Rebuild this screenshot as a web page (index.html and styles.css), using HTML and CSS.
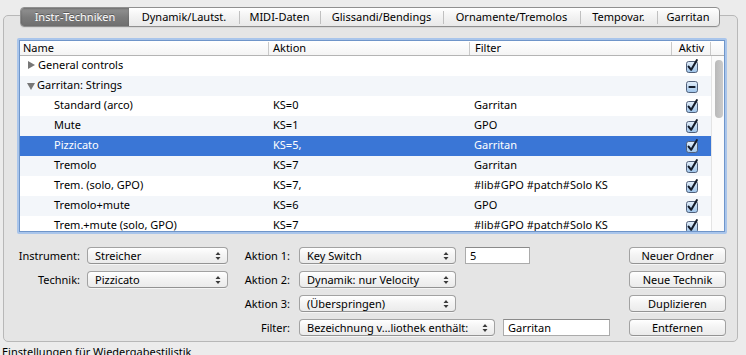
FILE: index.html
```html
<!DOCTYPE html>
<html>
<head>
<meta charset="utf-8">
<link rel="stylesheet" href="styles.css">
</head>
<body>
<svg class="defs" width="0" height="0">
  <defs>
    <linearGradient id="cbg" x1="0" y1="0" x2="0" y2="1">
      <stop offset="0" stop-color="#e4effa"/>
      <stop offset="1" stop-color="#9cc3ea"/>
    </linearGradient>
    <symbol id="cb-on" viewBox="0 0 14 14">
      <rect x="1.5" y="2.5" width="11" height="11" rx="2.2" fill="url(#cbg)" stroke="#50607a"/>
      <path d="M3.6 7.6 L6.2 10.8 L11.8 1.2" fill="none" stroke="#141c2b" stroke-width="2.1" stroke-linecap="round" stroke-linejoin="round"/>
    </symbol>
    <symbol id="cb-mix" viewBox="0 0 14 14">
      <rect x="1.5" y="2.5" width="11" height="11" rx="2.2" fill="url(#cbg)" stroke="#50607a"/>
      <path d="M4.3 8 H9.7" stroke="#141c2b" stroke-width="1.8" stroke-linecap="round"/>
    </symbol>
    <symbol id="updown" viewBox="0 0 6 10">
      <path d="M0.5 4 L3 1 L5.5 4 Z M0.5 6 L3 9 L5.5 6 Z" fill="#3a3a3a"/>
    </symbol>
  </defs>
</svg>

<div class="tabs">
  <div class="tab sel w1">Instr.-Techniken</div>
  <div class="tab w2">Dynamik/Lautst.</div>
  <div class="tab w3">MIDI-Daten</div>
  <div class="tab w4">Glissandi/Bendings</div>
  <div class="tab w5">Ornamente/Tremolos</div>
  <div class="tab w6">Tempovar.</div>
  <div class="tab w7">Garritan</div>
</div>

<div class="box">
  <div class="tbl">
    <div class="tbl-in">
      <div class="thead">
        <div class="th th-name">Name</div>
        <div class="th th-act">Aktion</div>
        <div class="th th-flt">Filter</div>
        <div class="th th-on">Aktiv</div>
        <div class="th th-sb"></div>
      </div>
      <div class="tbody">
        <div class="rows">
          <div class="row">
            <div class="c name grp"><span class="tri tri-r"></span>General controls</div>
            <div class="c act"></div>
            <div class="c flt"></div>
            <div class="c on"><svg class="cb"><use href="#cb-on"/></svg></div>
          </div>
          <div class="row alt">
            <div class="c name grp"><span class="tri tri-d"></span>Garritan: Strings</div>
            <div class="c act"></div>
            <div class="c flt"></div>
            <div class="c on"><svg class="cb"><use href="#cb-mix"/></svg></div>
          </div>
          <div class="row">
            <div class="c name child">Standard (arco)</div>
            <div class="c act">KS=0</div>
            <div class="c flt">Garritan</div>
            <div class="c on"><svg class="cb"><use href="#cb-on"/></svg></div>
          </div>
          <div class="row alt">
            <div class="c name child">Mute</div>
            <div class="c act">KS=1</div>
            <div class="c flt">GPO</div>
            <div class="c on"><svg class="cb"><use href="#cb-on"/></svg></div>
          </div>
          <div class="row sel">
            <div class="c name child">Pizzicato</div>
            <div class="c act">KS=5,</div>
            <div class="c flt">Garritan</div>
            <div class="c on"><svg class="cb"><use href="#cb-on"/></svg></div>
          </div>
          <div class="row alt">
            <div class="c name child">Tremolo</div>
            <div class="c act">KS=7</div>
            <div class="c flt">Garritan</div>
            <div class="c on"><svg class="cb"><use href="#cb-on"/></svg></div>
          </div>
          <div class="row">
            <div class="c name child">Trem. (solo, GPO)</div>
            <div class="c act">KS=7,</div>
            <div class="c flt">#lib#GPO #patch#Solo KS</div>
            <div class="c on"><svg class="cb"><use href="#cb-on"/></svg></div>
          </div>
          <div class="row alt">
            <div class="c name child">Tremolo+mute</div>
            <div class="c act">KS=6</div>
            <div class="c flt">GPO</div>
            <div class="c on"><svg class="cb"><use href="#cb-on"/></svg></div>
          </div>
          <div class="row">
            <div class="c name child">Trem.+mute (solo, GPO)</div>
            <div class="c act">KS=7</div>
            <div class="c flt">#lib#GPO #patch#Solo KS</div>
            <div class="c on"><svg class="cb"><use href="#cb-on"/></svg></div>
          </div>
        </div>
        <div class="scroll"><div class="thumb"></div></div>
      </div>
    </div>
  </div>

  <div class="controls">
    <div class="lbl">Instrument:</div>
    <div class="pop"><span>Streicher</span><svg class="ud"><use href="#updown"/></svg></div>
    <div class="lbl lbl2">Aktion 1:</div>
    <div class="pair">
      <div class="pop p-act"><span>Key Switch</span><svg class="ud"><use href="#updown"/></svg></div>
      <div class="fld f-ks">5</div>
    </div>
    <div class="btn">Neuer Ordner</div>

    <div class="lbl">Technik:</div>
    <div class="pop"><span>Pizzicato</span><svg class="ud"><use href="#updown"/></svg></div>
    <div class="lbl lbl2">Aktion 2:</div>
    <div class="pair">
      <div class="pop p-act"><span>Dynamik: nur Velocity</span><svg class="ud"><use href="#updown"/></svg></div>
    </div>
    <div class="btn">Neue Technik</div>

    <div class="lbl"></div>
    <div></div>
    <div class="lbl lbl2">Aktion 3:</div>
    <div class="pair">
      <div class="pop p-act"><span>(Überspringen)</span><svg class="ud"><use href="#updown"/></svg></div>
    </div>
    <div class="btn">Duplizieren</div>

    <div class="lbl"></div>
    <div></div>
    <div class="lbl lbl2">Filter:</div>
    <div class="pair">
      <div class="pop p-flt"><span>Bezeichnung v…liothek enthält:</span><svg class="ud"><use href="#updown"/></svg></div>
      <div class="fld f-flt">Garritan</div>
    </div>
    <div class="btn">Entfernen</div>
  </div>
</div>

<div class="foot">Einstellungen für Wiedergabestilistik</div>
</body>
</html>
```

FILE: styles.css
```css
html, body {
  margin: 0;
  padding: 0;
}
body {
  width: 746px;
  height: 355px;
  overflow: hidden;
  background: #ececec;
  font-family: "Noto Sans", "DejaVu Sans", sans-serif;
  font-size: 11px;
  color: #000;
}
.defs {
  display: block;
  width: 0;
  height: 0;
  overflow: hidden;
}

/* Tabs */
.tabs {
  display: flex;
  width: 700px;
  height: 20px;
  margin: 7px 0 0 20px;
  box-sizing: border-box;
  border: 1px solid #8f8f8f;
  border-radius: 4px;
  overflow: hidden;
  background: linear-gradient(#ffffff, #f1f1f1 55%, #e9e9e9);
  position: relative;
  z-index: 1;
  box-shadow: 0 1px 0 rgba(0,0,0,0.06);
}
.tab {
  display: flex;
  align-items: center;
  justify-content: center;
  box-sizing: border-box;
  height: 18px;
  white-space: nowrap;
  padding-bottom: 1px;
}
.tab + .tab {
  background: linear-gradient(#c0c0c0, #c0c0c0) left center / 1px 13px no-repeat;
}
.tab.sel {
  background: linear-gradient(#939393, #7c7c7c 50%, #6f6f6f);
  color: #fff;
  text-shadow: 0 -1px 0 rgba(0,0,0,0.35);
  box-shadow: inset 0 1px 2px rgba(0,0,0,0.25);
}
.tab.sel + .tab {
  background: none;
}
.w1 { width: 108px; }
.w2 { width: 110px; }
.w3 { width: 81px; }
.w4 { width: 123px; }
.w5 { width: 137px; }
.w6 { width: 77px; }
.w7 { flex: 1; }

/* Group box */
.box {
  margin: -12px 0 0 3px;
  width: 735px;
  box-sizing: border-box;
  border: 1px solid #b8b8b8;
  border-radius: 5px;
  background: #e5e5e5;
  padding: 22px 0 5px 0;
}

/* Table */
.tbl {
  margin: 0 10px 0 13px;
  border: 2px solid #a9c5eb;
  border-radius: 2px;
}
.tbl-in {
  border: 1px solid #6f95c9;
  background: #fff;
  height: 190px;
  overflow: hidden;
}
.thead {
  display: grid;
  grid-template-columns: 249px 201px 202px 39px 13px;
  height: 14px;
  line-height: 14px;
  border-bottom: 1px solid #b4b4b4;
  background: linear-gradient(#ffffff, #f4f4f4);
}
.th {
  position: relative;
  white-space: nowrap;
}
.th::after {
  content: "";
  position: absolute;
  right: 0;
  top: 1px;
  bottom: 0;
  width: 1px;
  background: #c9c9c9;
}
.th-sb::after { display: none; }
.th-name { padding-left: 3px; }
.th-act { padding-left: 4px; }
.th-flt { padding-left: 5px; }
.th-on { text-align: center; }

.tbody {
  display: flex;
  height: 175px;
  overflow: hidden;
}
.rows {
  width: 691px;
  flex: none;
}
.row {
  display: grid;
  grid-template-columns: 249px 201px 202px 39px;
  height: 20px;
  line-height: 18px;
}
.row.alt { background: #f3f6fa; }
.row.sel { background: #3a76d6; color: #fff; }
.c {
  white-space: nowrap;
  overflow: hidden;
}
.name.grp {
  display: flex;
  align-items: center;
  padding-left: 8px;
  padding-bottom: 2px;
}
.name.child { padding-left: 34px; }
.act { padding-left: 4px; }
.flt { padding-left: 4px; }
.on {
  display: flex;
  align-items: center;
  justify-content: center;
}
.cb {
  width: 14px;
  height: 14px;
  margin-top: -1px;
}
.tri {
  display: block;
  width: 0;
  height: 0;
  margin-right: 3px;
}
.tri-r {
  border-left: 7px solid #777;
  border-top: 4px solid transparent;
  border-bottom: 4px solid transparent;
}
.tri-d {
  border-top: 7px solid #777;
  border-left: 4px solid transparent;
  border-right: 4px solid transparent;
  margin-right: 2px;
  margin-left: -1px;
  margin-top: 2px;
}
.scroll {
  width: 13px;
  flex: none;
  box-sizing: border-box;
  border-left: 1px solid #e4e4e4;
  background: #fbfbfb;
  padding: 4px 0 0 3px;
}
.thumb {
  width: 8px;
  height: 58px;
  border-radius: 4px;
  background: linear-gradient(90deg, #b9b9b9, #cacaca);
}

/* Controls */
.controls {
  display: grid;
  grid-template-columns: 83px 141px 71px 330px 97px;
  grid-auto-rows: 17px;
  row-gap: 7px;
  margin-top: 13px;
}
.lbl {
  text-align: right;
  padding-right: 7px;
  line-height: 17px;
  white-space: nowrap;
}
.lbl2 { padding-right: 9px; }
.pair {
  display: flex;
}
.pop, .btn {
  display: flex;
  align-items: center;
  box-sizing: border-box;
  height: 17px;
  border: 1px solid #a2a2a2;
  border-bottom-color: #939393;
  border-radius: 4px;
  background: linear-gradient(#ffffff, #f3f3f3 50%, #ebebeb);
  box-shadow: 0 1px 0 rgba(255,255,255,0.6);
  white-space: nowrap;
}
.pop {
  justify-content: space-between;
  padding: 0 6px 0 7px;
}
.btn {
  justify-content: center;
}
.p-act { width: 157px; }
.p-flt { width: 196px; }
.ud {
  width: 6px;
  height: 10px;
  flex: none;
}
.fld {
  box-sizing: border-box;
  height: 17px;
  border: 1px solid #ababab;
  border-top-color: #8a8a8a;
  background: #fff;
  padding-left: 4px;
  line-height: 15px;
}
.f-ks { width: 65px; margin-left: 9px; }
.f-flt { width: 107px; margin-left: 8px; }

.foot {
  margin: 3px 0 0 2px;
  line-height: 13px;
  white-space: nowrap;
}
```
